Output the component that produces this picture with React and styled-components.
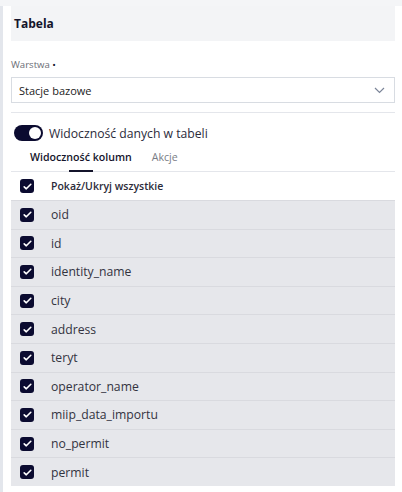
import React, { useState } from 'react';
import styled, { createGlobalStyle } from 'styled-components';

const GlobalStyle = createGlobalStyle`
  html, body {
    margin: 0;
    padding: 0;
    background: #ffffff;
    font-family: 'Open Sans', 'Noto Sans', sans-serif;
  }
  * {
    box-sizing: border-box;
  }
`;

const columns = [
  'oid',
  'id',
  'identity_name',
  'city',
  'address',
  'teryt',
  'operator_name',
  'miip_data_importu',
  'no_permit',
  'permit',
];

const App = () => {
  const [visible, setVisible] = useState(true);
  const [activeTab, setActiveTab] = useState('columns');

  return (
    <Page>
      <GlobalStyle />
      <Sidebar>
        <Panel>
          <Header>Tabela</Header>

          <Field>
            <Label>Warstwa <Dot>•</Dot></Label>
            <Select>
              <span>Stacje bazowe</span>
              <svg width="11" height="7" viewBox="0 0 11 7" fill="none">
                <path d="M1 1l4.5 4.5L10 1" stroke="#7b8598" strokeWidth="1.2" />
              </svg>
            </Select>
          </Field>

          <Divider />

          <ToggleRow onClick={() => setVisible(!visible)}>
            <Toggle $on={visible}>
              <Knob $on={visible} />
            </Toggle>
            <ToggleText>Widoczność danych w tabeli</ToggleText>
          </ToggleRow>

          <Tabs>
            <Tab $active={activeTab === 'columns'} onClick={() => setActiveTab('columns')}>
              Widoczność kolumn
            </Tab>
            <Tab $active={activeTab === 'actions'} onClick={() => setActiveTab('actions')}>
              Akcje
            </Tab>
          </Tabs>

          <List>
            <Row $head>
              <Check />
              <RowLabel $head>Pokaż/Ukryj wszystkie</RowLabel>
            </Row>
            {columns.map(col => (
              <Row key={col}>
                <Check />
                <RowLabel>{col}</RowLabel>
              </Row>
            ))}
          </List>
        </Panel>
      </Sidebar>
    </Page>
  );
};

const Check = () => (
  <CheckBox>
    <svg width="9" height="7" viewBox="0 0 9 7" fill="none">
      <path d="M1.2 3.8l2.1 2L7.8 1.3" stroke="#ffffff" strokeWidth="1.6" strokeLinecap="round" strokeLinejoin="round" />
    </svg>
  </CheckBox>
);

const Page = styled.div`
  background: #f4f5f7;
  padding-top: 6px;
  min-height: 492px;
`;

const Sidebar = styled.div`
  background: #ffffff;
  border-left: 3px solid #e3e6ec;
  padding: 0 7px 4px 8px;
  min-height: 486px;
`;

const Panel = styled.div`
  display: flex;
  flex-direction: column;
`;

const Header = styled.div`
  height: 35px;
  background: #f3f4f6;
  display: flex;
  align-items: center;
  padding-left: 3px;
  font-size: 12px;
  font-weight: 700;
  color: #14142b;
`;

const Field = styled.div`
  display: flex;
  flex-direction: column;
  padding-top: 16px;
`;

const Label = styled.div`
  font-size: 9.6px;
  color: #6b6e76;
  height: 20px;
  line-height: 16px;
`;

const Dot = styled.span`
  color: #14142b;
`;

const Select = styled.div`
  height: 26px;
  border: 1px solid #d8dce2;
  display: flex;
  align-items: center;
  justify-content: space-between;
  padding: 0 9px 0 7px;
  font-size: 11px;
  color: #222;
`;

const Divider = styled.div`
  height: 1px;
  background: #e4e6eb;
  margin-top: 9px;
`;

const ToggleRow = styled.div`
  display: flex;
  align-items: center;
  gap: 6px;
  padding: 11px 0 0 3px;
  height: 29px;
  cursor: pointer;
`;

const Toggle = styled.div`
  width: 29px;
  height: 16px;
  border-radius: 8px;
  background: ${p => (p.$on ? '#0b0b30' : '#c5c8d0')};
  position: relative;
  flex-shrink: 0;
`;

const Knob = styled.div`
  position: absolute;
  top: 2px;
  left: ${p => (p.$on ? '15px' : '2px')};
  width: 12px;
  height: 12px;
  border-radius: 50%;
  background: #ffffff;
`;

const ToggleText = styled.span`
  font-size: 12.2px;
  color: #2b2b3a;
`;

const Tabs = styled.div`
  display: flex;
  gap: 20px;
  padding-left: 19px;
  margin-top: 2px;
  border-bottom: 1px solid #e4e6eb;
`;

const Tab = styled.div`
  position: relative;
  font-size: 10.6px;
  font-weight: ${p => (p.$active ? 600 : 400)};
  color: ${p => (p.$active ? '#14142b' : '#7a7d86')};
  height: 27px;
  line-height: 26px;
  cursor: pointer;

  &::after {
    content: '';
    display: ${p => (p.$active ? 'block' : 'none')};
    position: absolute;
    bottom: -1px;
    left: 39px;
    width: 24px;
    height: 2px;
    background: #14142b;
  }
`;

const List = styled.div`
  display: flex;
  flex-direction: column;
`;

const Row = styled.div`
  display: flex;
  align-items: center;
  height: ${p => (p.$head ? '28px' : '28.6px')};
  padding-left: 9px;
  gap: 17px;
  background: ${p => (p.$head ? '#ffffff' : '#e6e7eb')};
  border-top: ${p => (p.$head ? 'none' : '1px solid #d9dadf')};
`;

const CheckBox = styled.div`
  width: 14px;
  height: 14px;
  border-radius: 3px;
  background: #0b0b30;
  display: flex;
  align-items: center;
  justify-content: center;
  flex-shrink: 0;
`;

const RowLabel = styled.span`
  font-size: ${p => (p.$head ? '10.5px' : '12.2px')};
  font-weight: ${p => (p.$head ? 600 : 400)};
  color: ${p => (p.$head ? '#2b2b3a' : '#33333f')};
`;

export default App;
